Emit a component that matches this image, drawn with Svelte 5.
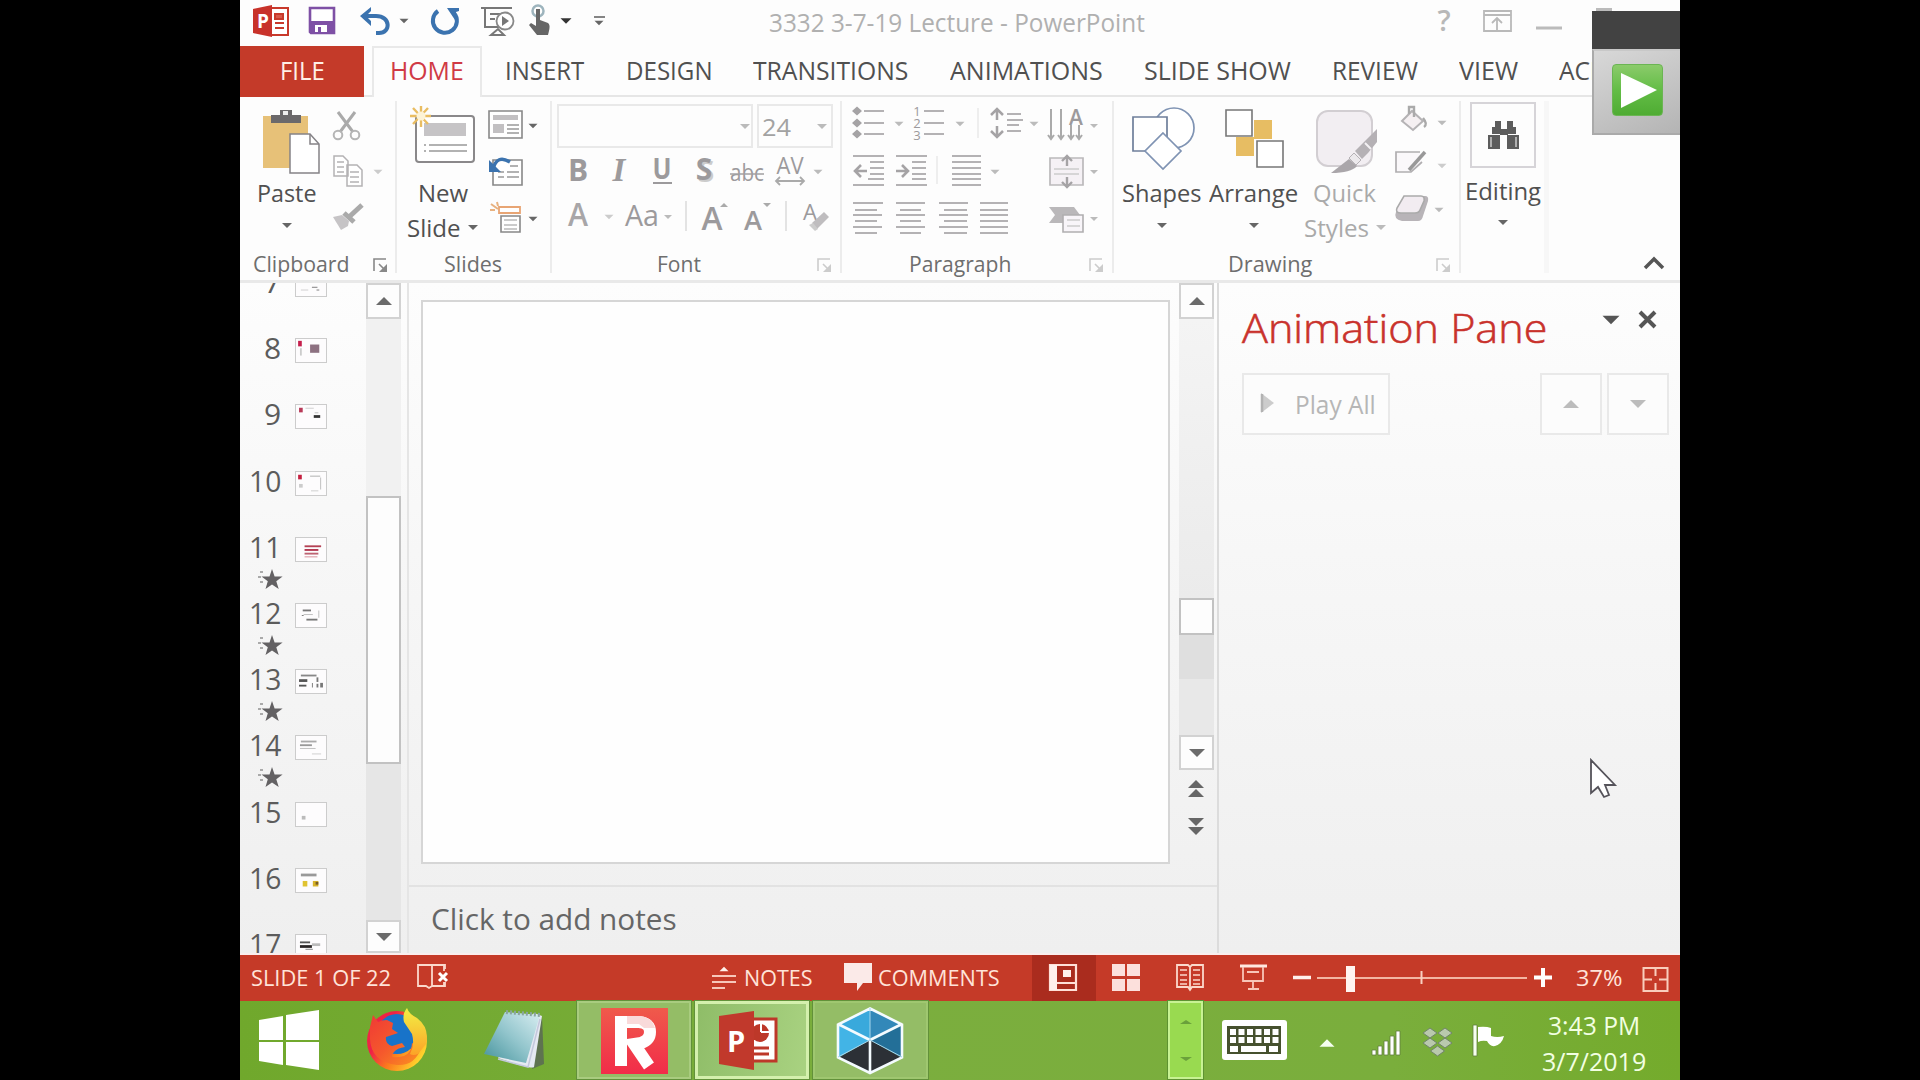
<script>
  const G = '#b4b2b4', D = '#666', T = '#fbd9cc';
  const dn = (x, y, c = D, w = 10) => `<path d="M${x - w / 2} ${y - w / 4}h${w}l${-w / 2} ${w / 2}z" fill="${c}"/>`;
  const up = (x, y, c = D, w = 16) => `<path d="M${x - w / 2} ${y + w / 4}h${w}l${-w / 2} ${-w / 2}z" fill="${c}"/>`;
  const lines = (list, c = G, w = 2) =>
    `<path d="${list.map(([x, y, l]) => `M${x} ${y}h${l}`).join('')}" stroke="${c}" stroke-width="${w}" fill="none"/>`;
  const launcher = (x, c) =>
    `<path d="M${x} 271v-12h12M${x + 5} 264l6 6" stroke="${c}" stroke-width="1.6" fill="none"/><path d="M${x + 13} 264v8h-8z" fill="${c}"/>`;
  const char = (s, x, y, size, extra = '', c = '#9c9a9c') =>
    `<text x="${x}" y="${y}" font-size="${size}" fill="${c}" text-anchor="middle" ${extra}>${s}</text>`;

  // Each entry: [x, y, width, height, markup], drawn in window coordinates.
  const art = {
    app: [240, 0, 58, 46, `<path d="M271 8h17v27h-17z" fill="#fff" stroke="#c8392b" stroke-width="2"/><path d="M275 14h8v5h-8zM275 23h9M275 28h9" fill="#d8594b" stroke="#c8392b" stroke-width="2"/><path d="M253 9l19-4v32l-19-4z" fill="#c8322a"/><text x="257" y="28" font-size="19" font-weight="700" fill="#fff">P</text>`],
    save: [298, 0, 50, 46, `<path d="M310 8h24v25h-23l-1-1z" fill="#fff" stroke="#7e50a5" stroke-width="2.6"/><path d="M311 21h22v11h-22z" fill="#7e50a5"/><path d="M315 25h12v7h-12z" fill="#fff"/><path d="M318 27h3v5h-3z" fill="#7e50a5"/>`],
    undo: [348, 0, 70, 46, `<path d="M363 16h13c15 0 15 17 3 17h-3" fill="none" stroke="#3b73af" stroke-width="4"/><path d="M371 7v4l-5 5 5 5v5l-11-10z" fill="#3b73af"/>` + dn(404, 21, '#666', 9)],
    redo: [418, 0, 52, 46, `<path d="M438 11a12 12 0 1 0 16 2" fill="none" stroke="#3b73af" stroke-width="4"/><path d="M447 8h12v3l-3 1-1 8z" fill="#3b73af"/>`],
    show: [470, 0, 51, 46, `<path d="M481 8h31M485 8v19h14M491 35h13l-6-6zM490 14h10M490 19h5" fill="none" stroke="#777" stroke-width="2"/><circle cx="505" cy="21" r="8.5" fill="#fff" stroke="#888" stroke-width="1.8"/><path d="M502 16v10l7-5z" fill="#777"/>`],
    touch: [521, 0, 59, 46, `<circle cx="538" cy="11" r="5.5" fill="none" stroke="#9db4bd" stroke-width="2.5"/><path d="M536 9h4v11l8 3c3 2 1 8 0 12h-11l-8-10 2-2 5 3z" fill="#666"/>` + dn(566, 21, '#333', 11)],
    custom: [580, 0, 40, 46, lines([[594, 17, 11]], '#666', 1.6) + dn(599, 23, '#666', 9)],
    help: [1420, 0, 50, 46, char('?', 1444, 31, 29, 'font-weight="600"', '#b8b8b8')],
    ribbonOpt: [1470, 0, 52, 46, `<path d="M1484 11h27v20h-27zM1484 15h27M1497 30v-11M1492 23l5-5 5 5" fill="none" stroke="#b9b9b9" stroke-width="1.8"/>`],
    min: [1522, 0, 60, 46, lines([[1536, 28, 26], [1596, 9.5, 16]], '#bbb', 3)],
    paste: [256, 101, 62, 74, `<path d="M263 116h45v52h-45z" fill="#e7c178"/><path d="M271 115h30v8h-30zM280 110h12v6h-12z" fill="#6b696b"/><path d="M283 111h5v4h-5z" fill="#eee"/><path d="M290 134h20l9 10v29h-29z" fill="#fff" stroke="#858387" stroke-width="1.5"/><path d="M310 134v10h9" fill="none" stroke="#858387" stroke-width="1.5"/>`],
    cut: [330, 101, 60, 48, `<path d="M338 112l15 20M355 112l-15 20" stroke="#aaa" stroke-width="3"/><circle cx="338" cy="135" r="4.3" fill="none" stroke="#b5b5b5" stroke-width="2"/><circle cx="355" cy="135" r="4.3" fill="none" stroke="#b5b5b5" stroke-width="2"/>`],
    copy: [330, 149, 60, 44, `<path d="M334 156h9l5 5v15h-14zM347 165h10l5 5v16h-15z" fill="#fff" stroke="#b4b2b4" stroke-width="1.5"/>` + lines([[337, 162, 7], [337, 167, 7], [337, 172, 7], [350, 172, 9], [350, 177, 9], [350, 182, 9]], G, 1.4) + dn(378, 172, '#ccc', 9)],
    brush: [330, 193, 60, 48, `<path d="M333 217l9-2 7 6-1 5-7 4z" fill="#c6c4c6"/><path d="M344 213l10 9M349 217l13-12" stroke="#aaa" stroke-width="5"/>`],
    newSlide: [412, 101, 62, 74, `<rect x="416" y="116" width="58" height="46" rx="3" fill="#fff" stroke="#8a888a" stroke-width="2"/><path d="M424 123h42v13h-42z" fill="#c6c4c6"/>` + lines([[424, 145, 2], [429, 145, 38], [424, 151, 2], [429, 151, 38]], '#999', 1.5) + `<path d="M421 106v21M410 116h21M413 108l15 16M428 108l-15 16" stroke="#e9bd62" stroke-width="2.4"/><circle cx="421" cy="116" r="4.5" fill="#fdf3d6"/>`],
    layout: [484, 101, 60, 48, `<path d="M489 111h33v27h-33z" fill="#fff" stroke="#888" stroke-width="1.6"/><path d="M493 115h25v5h-25zM493 124h11v9h-11z" fill="#c2c0c2"/>` + lines([[507, 125, 12], [507, 129, 12], [507, 133, 12]], '#999', 1.5) + dn(533, 126, D, 9)],
    reset: [484, 149, 60, 44, `<path d="M493 160h29v25h-29z" fill="#fff" stroke="#888" stroke-width="1.6"/>` + lines([[498, 172, 6], [507, 172, 12], [498, 177, 6], [507, 177, 12], [510, 166, 8]], '#999', 1.5) + `<path d="M493 169q4-15 17-7" fill="none" stroke="#3b73af" stroke-width="3.5"/><path d="M489 160v12h12z" fill="#3b73af"/>`],
    section: [484, 193, 60, 48, `<path d="M499 207h21v6h-21z" fill="#fff" stroke="#e8a574" stroke-width="1.8"/><path d="M491 204l7 5M490 210h5M497 202l1 4" stroke="#e8b280" stroke-width="2"/><path d="M501 216h19v16h-19z" fill="#fff" stroke="#888" stroke-width="1.6"/>` + lines([[504, 220, 13], [504, 225, 13], [504, 229, 13]], '#bbb', 1.3) + dn(533, 219, D, 9)],
    bold: [558, 149, 42, 44, char('B', 578, 181, 30, 'font-weight="700"')],
    ital: [600, 149, 38, 44, char('I', 619, 181, 33, 'font-style="italic" font-weight="700" font-family="Liberation Serif"')],
    under: [638, 149, 44, 44, char('U', 662, 179, 28, 'font-weight="700" textLength="19" lengthAdjust="spacingAndGlyphs"') + lines([[653, 183, 19]], '#9c9a9c')],
    shadow: [682, 149, 44, 44, char('S', 706, 182, 30, 'font-weight="700"', '#ccc') + char('S', 704, 180, 30, 'font-weight="700"')],
    strike: [726, 149, 44, 44, char('abc', 747, 181, 23, 'textLength="34" lengthAdjust="spacingAndGlyphs"') + lines([[730, 174, 34]], '#a19fa1', 1.5)],
    spacing: [770, 149, 62, 44, char('AV', 790, 174, 24, 'textLength="27" lengthAdjust="spacingAndGlyphs"') + `<path d="M776 181h28M780 177l-4 4 4 4M800 177l4 4-4 4" fill="none" stroke="#aaa" stroke-width="1.8"/>` + dn(818, 172, '#bbb', 9)],
    color: [558, 193, 58, 48, char('A', 578, 226, 32, 'font-weight="600" textLength="20" lengthAdjust="spacingAndGlyphs"', '#a8a6a8') + dn(609, 217, '#ccc', 9)],
    cas: [616, 193, 70, 48, char('Aa', 642, 226, 29, 'textLength="34" lengthAdjust="spacingAndGlyphs"') + dn(668, 217, '#bbb', 8) + `<path d="M686 201v30" stroke="#e3e3e3" stroke-width="2"/>`],
    grow: [686, 193, 47, 48, char('A', 712, 230, 32, 'font-weight="600" textLength="21" lengthAdjust="spacingAndGlyphs"') + up(724, 205, '#aaa', 8)],
    shrink: [733, 193, 53, 48, char('A', 753, 230, 27, 'font-weight="600" textLength="18" lengthAdjust="spacingAndGlyphs"') + dn(767, 205, '#aaa', 8) + `<path d="M786 201v30" stroke="#e3e3e3" stroke-width="2"/>`],
    clear: [786, 193, 46, 48, char('A', 810, 220, 22) + `<path d="M812 223l12-11 5 5-12 12z" fill="#bfbdbf"/><path d="M809 225l4-2 5 6-3 2z" fill="#ccc"/>`],
    bullets: [848, 101, 56, 48, `<path d="M857 106.500l5 4.500-5 4.500-5-4.500zM857 118.500l5 4.500-5 4.500-5-4.500zM857 129.500l5 4.500-5 4.500-5-4.500z" fill="#a5a3a5"/>` + lines([[864, 111, 20], [864, 123, 20], [864, 134, 20]]) + dn(899, 124, '#bbb', 9)],
    numbers: [904, 101, 74, 48, char('1', 917, 116, 13) + char('2', 917, 128, 13) + char('3', 917, 140, 13) + lines([[924, 111, 20], [924, 123, 20], [924, 134, 20]]) + dn(960, 124, '#bbb', 9) + `<path d="M978 108v30" stroke="#eee" stroke-width="2"/>`],
    lineSp: [978, 101, 66, 48, `<path d="M997 110v10M997 126v10M991 115l6-6 6 6M991 131l6 6 6-6" fill="none" stroke="#a5a3a5" stroke-width="2.5"/>` + lines([[1007, 114, 14], [1007, 120, 16], [1007, 125, 12], [1007, 131, 14]]) + dn(1034, 124, '#bbb', 9)],
    textDir: [1044, 101, 60, 48, `<path d="M1051 109v29M1061 109v29M1071 125v13M1079 125v13M1048 135l3 4 3-4M1058 135l3 4 3-4M1068 135l3 4 3-4M1076 135l3 4 3-4" fill="none" stroke="#aaa" stroke-width="2"/>` + char('A', 1076, 125, 21, 'font-weight="600"') + dn(1094, 126, '#bbb', 8)],
    dec: [848, 149, 44, 44, lines([[853, 156, 31], [870, 162, 14], [870, 168, 14], [870, 174, 14], [868, 179, 16], [853, 185, 31]]) + `<path d="M867 171h-11M861 165l-6 6 6 6" fill="none" stroke="#a5a3a5" stroke-width="2.6"/>`],
    inc: [892, 149, 46, 44, lines([[896, 156, 31], [912, 162, 14], [912, 168, 14], [912, 174, 14], [912, 179, 14], [896, 185, 31]]) + `<path d="M896 171h11M902 165l6 6-6 6" fill="none" stroke="#a5a3a5" stroke-width="2.6"/><path d="M937 156v28" stroke="#eee" stroke-width="2"/>`],
    cols: [938, 149, 106, 44, lines([156, 162, 168, 174, 179, 185].map((y) => [952, y, 29])) + dn(995, 172, '#bbb', 9)],
    alignText: [1044, 149, 60, 44, `<path d="M1050 158h33v27h-33z" fill="#f5f1f5" stroke="#bbb9bb" stroke-width="1.7"/><path d="M1067 166v-9M1067 177v9M1062 161l5-5 5 5M1062 182l5 5 5-5" fill="none" stroke="#a5a3a5" stroke-width="2.4"/>` + lines([[1054, 169, 25], [1054, 174, 25]], '#ccc', 1.5) + dn(1094, 172, '#bbb', 8)],
    alL: [848, 193, 46, 48, lines([[853, 203, 30], [855, 210, 22], [853, 215, 29], [855, 221, 22], [853, 227, 29], [855, 233, 22]])],
    alC: [894, 193, 42, 48, lines([[896, 203, 29], [900, 210, 21], [896, 215, 29], [900, 221, 21], [896, 227, 29], [900, 233, 21]])],
    alR: [936, 193, 42, 48, lines([[939, 203, 29], [944, 210, 23], [939, 215, 29], [944, 221, 23], [939, 227, 29], [944, 233, 23]])],
    alJ: [978, 193, 66, 48, lines([203, 210, 215, 221, 227, 233].map((y) => [980, y, 28]))],
    smart: [1044, 193, 60, 48, `<path d="M1049 207h25l6 8-8 8h-23l6-8z" fill="#bab8ba"/><path d="M1063 215h20v17h-20z" fill="#f8f5f9" stroke="#b0aeb0" stroke-width="1.6"/>` + lines([[1067, 220, 13], [1067, 226, 13]], '#ccc', 1.4) + dn(1094, 219, '#bbb', 8)],
    shapes: [1130, 101, 62, 74, `<circle cx="1173" cy="128" r="20" fill="#fff" stroke="#7f93b3" stroke-width="1.7"/><path d="M1132 117h34v34h-34z" fill="#fff" stroke="#6f7f9b" stroke-width="1.7"/><path d="M1162 133l18 18-18 18-18-18z" fill="#fff" stroke="#7f93b3" stroke-width="1.7"/>`],
    arrange: [1222, 101, 62, 74, `<path d="M1253 120h18v19h-18zM1235 137h18v19h-18z" fill="#e7bd63"/><path d="M1225 110h26v26h-26zM1256 141h26v26h-26z" fill="#fff" stroke="#777" stroke-width="1.6"/>`],
    quick: [1315, 101, 62, 74, `<rect x="1318" y="111" width="55" height="55" rx="11" fill="#f2eef2" stroke="#d2ced2" stroke-width="2"/><path d="M1332 173l18-14 8 7q-6 7-26 7z" fill="#aaa6aa"/><path d="M1350 158l5-5 7 7-5 5z" fill="#ece9ec" stroke="#b5b1b5"/><path d="M1356 151l13-13 9-9v13l-9 11-6 6z" fill="#b5b1b5"/><path d="M1366 143l6 6" stroke="#f5f2f5" stroke-width="2"/>`],
    fill: [1391, 101, 60, 44, `<path d="M1401 121l10-10 11 10-10 9z" fill="#f5f0f2" stroke="#b5b3b5" stroke-width="2"/><path d="M1408 114v-7h5v10M1422 118q5 6 1 9" fill="none" stroke="#aaa" stroke-width="2.4"/>` + dn(1441, 123, '#bbb', 9)],
    outline: [1391, 145, 60, 44, `<path d="M1419 152h-24v20h15l11-10" fill="#faf8fa" stroke="#b0aeb0" stroke-width="1.7"/><path d="M1424 152l-16 18" stroke="#999" stroke-width="3.5"/>` + dn(1441, 166, '#ccc', 9)],
    effect: [1391, 189, 60, 52, `<path d="M1403 196h21q4 0 3 5l-5 15q-1 5-5 5h-16q-9-2-6-9z" fill="#b8b4b8"/><path d="M1403 196h17q4 0 3 5l-4 9q-1 3-5 3h-14q-6 0-4-5z" fill="#f2ecf1" stroke="#aaa" stroke-width="1.6"/>` + dn(1438, 210, '#bbb', 9)],
    find: [1488, 119, 32, 32, `<path d="M1496 121h6v6h-6zM1508 121h6v6h-6zM1493 127h9v7h-9zM1508 127h9v7h-9zM1501 129h8v6h-8zM1489 135h12v14h-12zM1508 135h12v14h-12z" fill="#5c5c5c"/><path d="M1492 137v10M1517 137v10" stroke="#ccc" stroke-width="1.5"/>`],
    collapse: [1635, 241, 30, 41, `<path d="M1645 269l9-9 9 9" fill="none" stroke="#555" stroke-width="3.5"/>`],
    l1: [372, 241, 20, 41, launcher(374, '#888')],
    l2: [815, 241, 20, 41, launcher(818, '#ccc')],
    l3: [1087, 241, 20, 41, launcher(1090, '#ccc')],
    l4: [1434, 241, 20, 41, launcher(1437, '#ccc')],
    star: [258, 0, 26, 26, `<path d="M272 2l2.600 7.500h8l-6.300 4.800 2.400 7.700-6.700-4.600-6.500 4.600 2.300-7.700-6.300-4.800h8z" fill="#636163"/><path d="M260 5h3M258 10h3M260 15h3" stroke="#aaa" stroke-width="2"/>`],
    dblUp: [1179, 774, 34, 30, up(1196, 783) + up(1196, 792)],
    dblDn: [1179, 812, 34, 30, dn(1196, 821, '#666', 16) + dn(1196, 830, '#666', 16)],
    paneMenu: [1600, 300, 24, 40, dn(1611, 320, '#555', 17)],
    paneClose: [1634, 300, 28, 40, `<path d="M1640 312l15 15M1655 312l-15 15" stroke="#555" stroke-width="4"/>`],
    play: [1252, 390, 24, 30, `<path d="M1259 394l13 10-13 10z" fill="#ccc"/><path d="M1260 395v18" stroke="#b2b2b2" stroke-width="2.500"/>`],
    book: [410, 955, 44, 46, `<path d="M432 965v21l-3 2-3-2h-8v-21zh12v6M432 986h12v-4" fill="none" stroke="${T}" stroke-width="1.800"/><path d="M432 965h13v4M432 986h13v-4" fill="none" stroke="${T}" stroke-width="1.800"/><path d="M439 973l8 8M447 973l-8 8" stroke="#fff" stroke-width="3"/>`],
    notes: [708, 955, 34, 46, lines([[712, 976, 24], [712, 982, 24], [712, 988, 13]], '#f7c7ba') + up(724, 969, '#fff0ea', 9)],
    comment: [840, 955, 36, 46, `<path d="M844 963h28v20h-9l-6 8v-8h-13z" fill="#fbeae8"/>`],
    normal: [1032, 955, 64, 46, `<path d="M1050 965h26v25h-26zM1057 983h19" fill="none" stroke="#ffe0d8" stroke-width="2.200"/><path d="M1050 965h7v25h-7zM1063 970h8v7h-8z" fill="#fff0ec"/>`],
    sorter: [1096, 955, 64, 46, `<path d="M1112 964h13v12h-13zM1127 964h13v12h-13zM1112 979h13v12h-13zM1127 979h13v12h-13z" fill="#fce0dc"/>`],
    reading: [1160, 955, 64, 46, `<path d="M1177 965h11l2 2 2-2h11v22h-11l-2 3-2-3h-11zM1190 967v22" fill="none" stroke="${T}" stroke-width="1.800"/>` + lines([970, 975, 980, 984].flatMap((y) => [[1180, y, 7], [1193, y, 7]]), T, 1.500)],
    present: [1224, 955, 60, 46, lines([[1240, 966, 27]], '#ffe7df', 3) + `<path d="M1243 967v14h20v-14M1247 972h12M1253 981v8M1248 989h11" fill="none" stroke="#f8c5b8" stroke-width="1.800"/>`],
    zoom: [1284, 955, 280, 46, lines([[1293, 977.500, 18]], '#fff0ec', 3.500) + lines([[1317, 978, 210]], '#f3b5a2', 1.800) + `<path d="M1421.500 971v13" stroke="#f9cfc0" stroke-width="2"/><path d="M1346 966h9v26h-9z" fill="#fff4f0"/><path d="M1534 977.500h18M1543 968v19" stroke="#fff" stroke-width="4"/>`],
    fitWin: [1636, 955, 44, 46, `<path d="M1643.500 968h24v23h-24zM1655.500 968v8M1655.500 983v8M1643 979.500h9M1659 979.500h9" fill="none" stroke="#f9cdbc" stroke-width="2"/>`],
    win: [240, 1001, 112, 79, `<path d="M259 1020l24-4v24h-24zM286 1015l33-5v30h-33zM259 1042h24v23l-24-4zM286 1042h33v28l-33-5z" fill="#fff"/>`],
    fox: [352, 1001, 112, 79, `<circle cx="397" cy="1041" r="30" fill="url(#fx)"/><circle cx="397" cy="1034" r="20" fill="#1873c9"/><path d="M370 1027l3-12 5 7q4-2 9-2l6 3-1 6 6 4-12 4q-1 7 6 9l10-3 3 4q-8 1-11 5-7 8 10 4 8-4 8-13l9 5q-6 18-24 17-26-3-27-26z" fill="url(#fo)"/><path d="M407 1008q2 6 10 10 13 10 9 26l-8 10q-5 2-8 0 5-9 2-20l-8-12q-2-8 3-14z" fill="url(#fy)"/>`],
    pad: [464, 1001, 113, 79, `<path d="M542 1016l2 48-12 5z" fill="#5e7350"/><path d="M534 1013l8 3-8 51q-2 3-36-9z" fill="#e5e9f2"/><path d="M505 1012l35 3-14 48-42-9z" fill="url(#np)"/><path d="M506 1012l35 3" stroke="#8aa4a0" stroke-width="4" stroke-dasharray="2 2"/><path d="M498 1059l30 8 12-48" stroke="#c3c8dc" stroke-width="1.500" fill="none"/>`],
    rec: [577, 1001, 113, 79, `<path d="M600 1008h67v66h-67z" fill="url(#rr)"/><path d="M620 1066v-44h18q11 1 11 10 0 8-9 11l-7 1 15 22" fill="none" stroke="#fff" stroke-width="12"/><path d="M626 1016h13q12 1 15 12h-11l-5-4h-12z" fill="#f9dada"/>`],
    ppt: [695, 1001, 113, 79, `<path d="M745 1019h30v42h-30z" fill="#fff" stroke="#bd3829" stroke-width="3"/><circle cx="759" cy="1033" r="9" fill="#bd3829"/><path d="M760 1032v-10M760 1032h10" stroke="#fff" stroke-width="2"/><path d="M752 1048h16M752 1054h16" stroke="#bd3829" stroke-width="3"/><path d="M718 1016l35-5v59l-35-6z" fill="#c1392c"/><text x="726" y="1052" font-size="29" font-weight="700" fill="#fff">P</text>`],
    cube: [813, 1001, 115, 79, `<path d="M870 1008l-32 16v32l32-17z" fill="#39a9dc"/><path d="M838 1024v34l32-18z" fill="#42b4e6"/><path d="M870 1008l32 16-32 16z" fill="#3288b9"/><path d="M902 1024v34l-32-18z" fill="#236f98"/><path d="M870 1040l32 18-32 15-32-15z" fill="#2c3036"/><path d="M870 1008.500l32 16v33l-32 15.500-32-15.500v-33zM870 1040v33M870 1040l-32-16M870 1040l32-16" fill="none" stroke="#f4fbff" stroke-width="2.600"/><path d="M870 1008v32M838 1057l32-17 32 17" fill="none" stroke="#a5d5ed" stroke-width="1"/>`],
    keys: [1204, 1001, 100, 79, `<rect x="1223" y="1020" width="65" height="40" rx="3" fill="#fff"/><path d="M1228 1026h54v28h-54z" fill="#46512e"/>` + [1029, 1037].map((y) => [0, 1, 2, 3, 4, 5].map((i) => `<path d="M${1231 + i * 8.500} ${y}h6v6h-6z" fill="#fff"/>`).join('')).join('') + `<path d="M1231 1046h8v6h-8zM1242 1046h25v6h-25zM1270 1046h9v6h-9z" fill="#fff"/>`],
    tray: [1304, 1001, 50, 79, up(1328, 1043, '#f5fff0', 15)],
    signal: [1354, 1001, 60, 79, `<path d="M1373 1050h4v5h-4zM1379 1046h4v9h-4zM1385 1041h4v14h-4zM1391 1036h4v19h-4zM1397 1031h4v24h-4z" fill="#fff" stroke="#5f7d3c" stroke-width=".8"/>`],
    drop: [1414, 1001, 50, 79, `<path d="M1431 1028l7 5-7 5-7-5zM1446 1028l7 5-7 5-7-5zM1431 1038l7 5-7 5-7-5zM1446 1038l7 5-7 5-7-5zM1438.500 1046l7 5-7 5-7-5z" fill="#b9c9ad" stroke="#71846a" stroke-width="1"/>`],
    flag: [1464, 1001, 66, 79, `<path d="M1474 1025h4v31h-4z" fill="#f7fff0" stroke="#5f7d3c" stroke-width=".8"/><path d="M1479 1027q8-1 13 1v8q6 2 13 0-2 8-9 10-5 1-8-5-5-1-9 1z" fill="#fff"/>`]
  };

  const tabs = [['INSERT', 79, 505], ['DESIGN', 87, 625.5], ['TRANSITIONS', 155, 753], ['ANIMATIONS', 153, 949.5], ['SLIDE SHOW', 147, 1143.5], ['REVIEW', 86, 1332], ['VIEW', 59, 1459], ['ACROBAT', 110, 1559]]
    .map(([name, w, x], i, all) => ({ name, w, gap: i ? x - all[i - 1][2] - all[i - 1][1] : 23 }));

  // Miniature marks inside each 32 by 25 thumbnail.
  const bar = (x, y, w, h, c = '#777') => `<path d="M${x} ${y}h${w}v${h}h${-w}z" fill="${c}"/>`;
  const slides = [
    [7, 0, bar(17, 15, 6, 1) + bar(22, 18, 3, 1) + bar(5, 18, 8, 1, '#ccc')],
    [8, 0, bar(2, 2, 4, 6, '#c51f4c') + bar(4, 10, 2, 8, '#ccc') + bar(15, 6, 10, 9, '#8d7181')],
    [9, 0, bar(3, 3, 4, 5, '#b83a58') + bar(19, 11, 7, 3, '#333') + bar(10, 3, 9, 1, '#ccc') + bar(20, 8, 4, 1, '#bbb')],
    [10, 0, bar(2, 3, 4, 5, '#c51f3f') + bar(15, 4, 11, 1, '#aaa') + bar(26, 6, 1, 13, '#bbb') + bar(3, 13, 4, 4, '#ccc') + bar(16, 20, 8, 1, '#ccc')],
    [11, 1, bar(9, 8, 18, 2, '#b44054') + bar(9, 12, 15, 2, '#b1324c') + bar(9, 16, 15, 2, '#bd6271') + bar(9, 20, 14, 1, '#d58995')],
    [12, 1, bar(7, 6, 9, 2) + bar(6, 12, 2, 1) + bar(11, 16, 12, 2) + bar(24, 7, 1, 8, '#bbb') + bar(8, 11, 10, 1, '#bbb')],
    [13, 1, bar(5, 5, 17, 2, '#888') + bar(3, 10, 9, 3, '#555') + bar(3, 16, 8, 2, '#555') + bar(17, 14, 1, 5) + bar(22, 8, 2, 5) + bar(22, 15, 2, 4) + bar(26, 14, 3, 5)],
    [14, 1, bar(5, 5, 17, 2, '#aaa') + bar(4, 9, 13, 2, '#999') + bar(4, 13, 17, 1, '#bbb') + bar(17, 19, 10, 1, '#ccc')],
    [15, 0, bar(6, 14, 4, 4, '#bbb')],
    [16, 0, bar(5, 5, 17, 3, '#999') + bar(7, 13, 5, 6, '#e0c331') + bar(18, 13, 6, 6, '#d7b329') + bar(21, 14, 3, 3, '#775c27')],
    [17, 0, bar(4, 7, 11, 2, '#555') + bar(4, 11, 13, 3, '#292525') + bar(17, 9, 9, 3, '#bbb') + bar(10, 15, 8, 1, '#777')]
  ];

  // Squeezes or stretches a run of text to the width set for it.
  function fit(el, w) {
    el.style.transform = `scaleX(${w / el.offsetWidth})`;
  }
</script>

{#snippet pic(n)}
  <svg width={art[n][2]} height={art[n][3]} viewBox={art[n].slice(0, 4).join(' ')}>{@html art[n][4]}</svg>
{/snippet}

{#snippet label(text, w, cls = '')}
  <span class="label {cls}" style:width="{w}px"><span class="run" use:fit={w}>{text}</span></span>
{/snippet}

{#snippet arrow(faint = false)}
  <i class="arrow" class:faint></i>
{/snippet}

<svg class="defs" width="0" height="0">
  <defs>
    <linearGradient id="fx" x1="0" y1="0" x2="1" y2=".6"><stop offset="0" stop-color="#f02b3e" /><stop offset=".35" stop-color="#ef2147" /><stop offset=".65" stop-color="#fb7a1d" /><stop offset="1" stop-color="#ffd12c" /></linearGradient>
    <linearGradient id="fo" x1="0" y1="0" x2="1" y2="1"><stop offset="0" stop-color="#ef3a35" /><stop offset=".5" stop-color="#f5592c" /><stop offset="1" stop-color="#fb9420" /></linearGradient>
    <linearGradient id="fy" x1="0" y1="0" x2="0" y2="1"><stop offset="0" stop-color="#f2ef45" /><stop offset="1" stop-color="#fca327" /></linearGradient>
    <linearGradient id="np" x1="1" y1="0" x2="0" y2="1"><stop offset="0" stop-color="#d9eef2" /><stop offset=".5" stop-color="#92c5cc" /><stop offset="1" stop-color="#43929b" /></linearGradient>
    <linearGradient id="rr" x1="0" y1="0" x2="0" y2="1"><stop offset="0" stop-color="#ef5a4b" /><stop offset="1" stop-color="#f22c49" /></linearGradient>
  </defs>
</svg>

<div class="screen">
  <div class="window">
    <header class="titlebar">
      {@render pic('app')}{@render pic('save')}{@render pic('undo')}{@render pic('redo')}{@render pic('show')}{@render pic('touch')}{@render pic('custom')}
      <div class="title">{@render label('3332 3-7-19 Lecture - PowerPoint', 376)}</div>
      {@render pic('help')}{@render pic('ribbonOpt')}{@render pic('min')}
    </header>

    <nav class="tabs">
      <div class="file">{@render label('FILE', 45)}</div>
      <div class="home">{@render label('HOME', 74)}</div>
      {#each tabs as t}
        <div class="tab" style:margin-left="{t.gap}px">{@render label(t.name, t.w)}</div>
      {/each}
    </nav>

    <section class="ribbon">
      <div class="group clipboard">
        <div class="body">
          <div class="big">{@render pic('paste')}{@render label('Paste', 60)}<div class="second">{@render arrow()}</div></div>
          <div class="small">{@render pic('cut')}{@render pic('copy')}{@render pic('brush')}</div>
        </div>
        <footer>{@render label('Clipboard', 97)}{@render pic('l1')}</footer>
      </div>

      <div class="group slidegroup">
        <div class="body">
          <div class="big">{@render pic('newSlide')}{@render label('New', 50)}<div class="second">{@render label('Slide', 54)}{@render arrow()}</div></div>
          <div class="small">{@render pic('layout')}{@render pic('reset')}{@render pic('section')}</div>
        </div>
        <footer>{@render label('Slides', 58)}</footer>
      </div>

      <div class="group font">
        <div class="rows">
          <div class="row combos">
            <div class="combo face">{@render arrow(true)}</div>
            <div class="combo size">{@render label('24', 29)}{@render arrow(true)}</div>
          </div>
          <div class="row">{#each ['bold', 'ital', 'under', 'shadow', 'strike', 'spacing'] as n}{@render pic(n)}{/each}</div>
          <div class="row">{#each ['color', 'cas', 'grow', 'shrink', 'clear'] as n}{@render pic(n)}{/each}</div>
        </div>
        <footer>{@render label('Font', 44)}{@render pic('l2')}</footer>
      </div>

      <div class="group paragraph">
        <div class="rows">
          <div class="row">{#each ['bullets', 'numbers', 'lineSp', 'textDir'] as n}{@render pic(n)}{/each}</div>
          <div class="row">{#each ['dec', 'inc', 'cols', 'alignText'] as n}{@render pic(n)}{/each}</div>
          <div class="row">{#each ['alL', 'alC', 'alR', 'alJ', 'smart'] as n}{@render pic(n)}{/each}</div>
        </div>
        <footer>{@render label('Paragraph', 102)}{@render pic('l3')}</footer>
      </div>

      <div class="group drawing">
        <div class="body">
          <div class="big">{@render pic('shapes')}{@render label('Shapes', 80)}<div class="second">{@render arrow()}</div></div>
          <div class="big">{@render pic('arrange')}{@render label('Arrange', 89)}<div class="second">{@render arrow()}</div></div>
          <div class="big dim">{@render pic('quick')}{@render label('Quick', 63)}<div class="second">{@render label('Styles', 65)}{@render arrow(true)}</div></div>
          <div class="small">{@render pic('fill')}{@render pic('outline')}{@render pic('effect')}</div>
        </div>
        <footer>{@render label('Drawing', 84)}{@render pic('l4')}</footer>
      </div>

      <div class="group editing">
        <div class="findbox">{@render pic('find')}</div>
        {@render label('Editing', 76)}
        {@render arrow()}
      </div>
      <div class="rest">{@render pic('collapse')}</div>
    </section>

    <main class="work">
      <aside class="slides">
        {#each slides as [n, anim, marks]}
          <div class="item">
            <div class="line">
              {@render label(n, n > 9 ? 32 : 17)}
              <svg class="thumb" width="32" height="25" viewBox="0 0 32 25">{@html marks}</svg>
            </div>
            {#if anim}<div class="anim">{@render pic('star')}</div>{/if}
          </div>
        {/each}
      </aside>

      <div class="scroll left">
        <div class="btn"><i class="tri up"></i></div>
        <div class="track"></div>
        <div class="knob"></div>
        <div class="track low"></div>
        <div class="btn"><i class="tri"></i></div>
      </div>

      <div class="center">
        <div class="canvas">
          <div class="slide"></div>
          <div class="scroll right">
            <div class="btn"><i class="tri up"></i></div>
            <div class="track"></div>
            <div class="knob"></div>
            <div class="track pressed"></div>
            <div class="track low"></div>
            <div class="btn"><i class="tri"></i></div>
            <div class="jump">{@render pic('dblUp')}{@render pic('dblDn')}</div>
          </div>
        </div>
        <div class="notes">{@render label('Click to add notes', 246)}</div>
      </div>

      <aside class="pane">
        <div class="panehead">{@render label('Animation Pane', 305)}<div class="ctl">{@render pic('paneMenu')}{@render pic('paneClose')}</div></div>
        <div class="panetools">
          <div class="pbtn wide">{@render pic('play')}{@render label('Play All', 81)}</div>
          <div class="pbtn"><i class="tri up pale"></i></div>
          <div class="pbtn"><i class="tri pale"></i></div>
        </div>
      </aside>
    </main>

    <div class="status">
      {@render label('SLIDE 1 OF 22', 140)}
      {@render pic('book')}
      <div class="push">{@render pic('notes')}{@render label('NOTES', 69)}</div>
      <div class="comments">{@render pic('comment')}{@render label('COMMENTS', 122)}</div>
      <div class="views"><div class="active">{@render pic('normal')}</div>{@render pic('sorter')}{@render pic('reading')}{@render pic('present')}</div>
      {@render pic('zoom')}
      <div class="percent">{@render label('37%', 46)}</div>
      {@render pic('fitWin')}
    </div>

    <div class="taskbar">
      {@render pic('win')}{@render pic('fox')}{@render pic('pad')}
      <div class="task">{@render pic('rec')}</div>
      <div class="task current">{@render pic('ppt')}</div>
      <div class="task last">{@render pic('cube')}</div>
      <div class="grip"><i></i><i></i></div>
      {@render pic('keys')}{@render pic('tray')}{@render pic('signal')}{@render pic('drop')}{@render pic('flag')}
      <div class="clock">{@render label('3:43 PM', 92)}{@render label('3/7/2019', 104)}</div>
    </div>

    <div class="recorder">
      <div class="cap"></div>
      <div class="panel"><div class="go"><svg width="51" height="52" viewBox="0 0 51 52"><path d="M8 8l36 17-36 18z" fill="#fff" /></svg></div></div>
    </div>

    <svg class="cursor" width="30" height="42" viewBox="0 0 30 42"><path d="M2 2v33l7-6 6 10 5-2-4-10h10z" fill="#fff" stroke="#55535a" stroke-width="1.8" /></svg>
  </div>
</div>

<style>
  :global(body) { margin: 0; background: #000; overflow: hidden; }
  .screen { width: 1920px; height: 1080px; background: #000; display: flex; justify-content: center; font-family: 'Open Sans', 'Noto Sans', sans-serif; }
  .screen * { box-sizing: border-box; }
  .defs { position: absolute; }
  svg { display: block; flex: none; overflow: visible; }
  .window { width: 1440px; height: 1080px; position: relative; display: flex; flex-direction: column; background: #fdfdfd; overflow: hidden; color: #505050; }
  .label { display: block; flex: none; white-space: nowrap; }
  .run { display: inline-block; transform-origin: 0 50%; }
  .arrow { display: block; width: 0; border: 5px solid transparent; border-top-color: #666; border-bottom: 0; }
  .arrow.faint { border-top-color: #bbb; }

  .titlebar { display: flex; height: 46px; flex: none; }
  .title { width: 800px; padding: 0 0 0 149px; line-height: 44px; font-size: 26px; color: #b0b0b0; }

  .tabs { display: flex; height: 51px; flex: none; font-size: 25.5px; line-height: 49px; box-shadow: inset 0 -2px #e6e6e6; overflow: hidden; }
  .file { width: 124px; height: 51px; flex: none; background: #c43a29; color: #fff0e6; display: flex; justify-content: center; }
  .home { width: 110px; height: 51px; flex: none; margin-left: 8px; background: #fdfdfd; border: 2px solid #e9e9e9; border-bottom: 0; display: flex; justify-content: center; line-height: 45px; color: #d03a45; }

  .ribbon { display: flex; height: 186px; flex: none; padding-top: 4px; border-bottom: 3px solid #e9e9e9; }
  .group { position: relative; height: 172px; border-right: 2px solid #ececec; flex: none; font-size: 24.5px; }
  .clipboard { width: 157px; }
  .slidegroup { width: 155px; }
  .font { width: 290px; }
  .paragraph { width: 272px; }
  .drawing { width: 347px; }
  .editing { width: 88px; border-right: 5px solid #f7f7f7; display: flex; flex-direction: column; align-items: center; line-height: 34px; padding-top: 1px; }
  .body { display: flex; height: 140px; }
  .big { display: flex; flex-direction: column; align-items: center; line-height: 35px; }
  .second { display: flex; height: 34px; gap: 7px; align-items: center; }
  .clipboard .body { padding-left: 16px; }
  .clipboard .big { width: 62px; margin-right: 12px; }
  .clipboard .small { display: flex; flex-direction: column; }
  .slidegroup .body { padding-left: 4px; }
  .slidegroup .big { width: 83px; }
  .drawing .body { padding-left: 8px; }
  .drawing .big { width: 79px; }
  .drawing .big:nth-child(2) { width: 89px; margin-left: 8px; }
  .drawing .big:nth-child(3) { width: 85px; margin-left: 4px; }
  .drawing .small { margin-left: 5px; }
  .dim { color: #aaa; }
  .rows { padding-left: 6px; height: 140px; }
  .row { display: flex; }
  .combos { height: 48px; padding-top: 3px; gap: 4px; margin-left: -1px; }
  .combo { height: 44px; border: 2px solid #e9e9e9; display: flex; align-items: center; justify-content: flex-end; color: #a2a2a2; }
  .face { width: 196px; padding-right: 1px; }
  .size { width: 76px; justify-content: space-between; padding: 0 4px 0 3px; }
  footer { display: flex; height: 41px; font-size: 21.5px; line-height: 46px; color: #6e6e6e; }
  .clipboard footer { padding-left: 13px; gap: 22px; }
  .slidegroup footer { padding-left: 47px; }
  .font footer { padding-left: 105px; gap: 114px; }
  .paragraph footer { padding-left: 67px; gap: 76px; }
  .drawing footer { padding-left: 114px; gap: 122px; }
  .findbox { width: 66px; height: 66px; border: 2px solid #d6d4d8; display: flex; align-items: center; justify-content: center; margin-bottom: 6px; }
  .editing .arrow { margin-top: 12px; }
  .rest { flex: 1; display: flex; justify-content: flex-end; align-items: flex-end; padding-right: 15px; }
  .rest :global(svg) { margin-bottom: -1px; }

  .work { display: flex; height: 672px; flex: none; background: linear-gradient(#fdfdfd, #f7f7f7 40%, #efefef); border-bottom: 2px solid #faeeee; }
  .slides { width: 127px; height: 670px; overflow: hidden; }
  .item { height: 66.2px; }
  .item:first-child { margin-top: -17px; }
  .line { height: 34px; display: flex; justify-content: flex-end; align-items: center; gap: 14px; padding-right: 40px; line-height: 34px; font-size: 30px; color: #5c5c5c; }
  .line .label { margin-top: -2px; }
  .thumb { background: #fdfcfd; border: 1px solid #ccc; margin-top: 3px; }
  .anim { padding: 2px 0 0 18px; }

  .scroll { width: 35px; flex: none; display: flex; flex-direction: column; align-items: stretch; }
  .btn { height: 36px; flex: none; border: 2px solid #d2d2d2; background: #fdfdfd; display: flex; align-items: center; justify-content: center; }
  .tri { display: block; border: 8px solid transparent; border-top-color: #6b6b6b; border-bottom: 0; }
  .tri.up { border-top: 0; border-bottom: 8px solid #6b6b6b; }
  .track { background: #f1f1f1; }
  .knob { border: 2px solid #c2c2c2; background: #fdfdfd; }
  .left { margin: 0 6px 0 -1px; }
  .left .track { height: 177px; }
  .left .knob { height: 268px; }
  .left .low { height: 156px; background: #e6e6e6; }
  .left .btn:last-child { height: 33px; }
  .center { width: 812px; flex: none; border-left: 2px solid #e5e5e5; border-right: 2px solid #dcdcdc; }
  .canvas { display: flex; height: 604px; border-bottom: 2px solid #e2e2e2; padding-left: 12px; }
  .slide { width: 749px; height: 564px; margin: 17px 9px 0 0; border: 2px solid #d6d6d6; background: #fefefe; flex: none; }
  .right .track { height: 279px; background: linear-gradient(#f4f4f4, #ebebeb); }
  .right .knob { height: 37px; }
  .right .pressed { height: 44px; background: #dfdfdf; }
  .right .low { height: 56px; background: #e8e8e8; }
  .right .btn:nth-child(6) { height: 35px; }
  .jump { display: flex; flex-direction: column; gap: 8px; padding-top: 5px; }
  .notes { padding: 11px 0 0 22px; font-size: 29px; line-height: 42px; color: #666; }
  .pane { flex: 1; padding-left: 23px; }
  .panehead { height: 90px; display: flex; justify-content: space-between; padding: 15px 18px 0 0; font-size: 41px; font-weight: 300; line-height: 58px; color: #c9322c; -webkit-text-stroke: .6px #c9322c; }
  .ctl { display: flex; gap: 10px; padding-top: 2px; }
  .panetools { display: flex; gap: 5px; }
  .pbtn { width: 62px; height: 62px; border: 2px solid #e9e9e9; background: #fcfcfc; display: flex; align-items: center; justify-content: center; }
  .wide { width: 148px; margin-right: 145px; justify-content: flex-start; padding-left: 10px; gap: 17px; font-size: 25px; color: #b6b6b6; }
  .pale { border-top-color: #bcbcbc; }
  .tri.up.pale { border-bottom-color: #bcbcbc; }

  .status { display: flex; height: 46px; flex: none; background: #c53a28; color: #ffe3d8; font-size: 21.5px; line-height: 45px; padding-left: 11px; }
  .status > :global(.label) { margin-right: 19px; }
  .push { display: flex; margin-left: 254px; gap: 2px; }
  .comments { display: flex; margin-left: 27px; gap: 2px; }
  .views { display: flex; margin-left: 32px; }
  .active { background: #aa2c1e; }
  .percent { width: 72px; padding-left: 12px; }

  .taskbar { display: flex; height: 79px; flex: none; background: linear-gradient(90deg, #70a82c, #7bae3e 45%, #7aae3c 80%, #74ab2c); }
  .task { width: 114px; height: 78px; margin-right: 4px; background: #94bd66; border: 2px solid #a9cc7f; outline: 1px solid #62913a; outline-offset: 0; display: flex; align-items: center; justify-content: center; }
  .current { background: linear-gradient(100deg, #8fbd68, #a9d281); border: 3px solid #d4f0ad; }
  .last { width: 115px; margin-right: 240px; border-color: #9fc770; }
  .grip { width: 35px; height: 78px; background: #99da50; border: 2px solid #c8f293; outline: 1px solid #5e9232; display: flex; flex-direction: column; align-items: center; justify-content: space-around; flex: none; }
  .grip i { border: 6px solid transparent; border-top: 0; border-bottom: 4px solid #6aa13b; }
  .grip i:last-child { transform: rotate(180deg); }
  .clock { width: 150px; flex: none; display: flex; flex-direction: column; align-items: center; font-size: 26px; line-height: 36px; color: #f2ffe2; padding: 6px 20px 0 0; }

  .recorder { position: absolute; left: 1352px; top: 11px; width: 88px; height: 124px; display: flex; flex-direction: column; }
  .cap { height: 38px; background: #424242; }
  .panel { height: 86px; background: linear-gradient(155deg, #d8d8d8, #b4b4b4); border: 2px solid #aaa; border-right: 0; border-top-color: #c8c8c8; padding: 13px 0 0 18px; }
  .go { width: 51px; height: 52px; border-radius: 4px; background: linear-gradient(#8bcb6b, #63bd46 50%, #4fac33); border: 1px solid #6bb553; }
  .cursor { position: absolute; left: 1349px; top: 758px; }
</style>
